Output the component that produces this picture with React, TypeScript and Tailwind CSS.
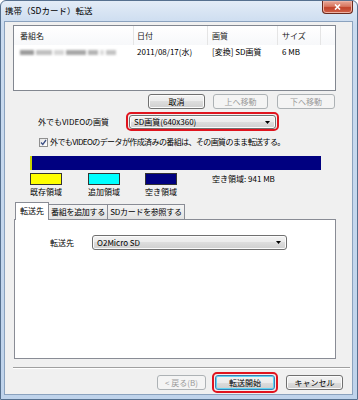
import clsx from 'clsx'
import { ReactNode } from 'react'

const btnFace = 'bg-[linear-gradient(#f2f2f2,#ebebeb_50%,#dddddd_50%,#cfcfcf)]'

const Btn = ({ w, children, disabled, def }: { w: string; children: ReactNode; disabled?: boolean; def?: boolean }) => (
    <div
        className={clsx(
            'h-[15px] flex items-center justify-center rounded-[3px] border text-[8px] leading-none',
            w,
            disabled && 'border-[#adb2b5] bg-[#f4f4f4] text-[#9a9a9a]',
            !disabled && !def && ['border-[#707070] text-black shadow-[inset_0_0_0_1px_#fbfbfb]', btnFace],
            def && ['border-[#3c7fb1] text-black shadow-[inset_0_0_0_1px_#5fd3f3]', btnFace]
        )}
    >
        {children}
    </div>
)

const Arrow = () => (
    <svg width="5" height="3" viewBox="0 0 5 3" className="shrink-0">
        <path d="M0 0h5L2.5 3z" fill="#000" />
    </svg>
)

const Combo = ({ w, children }: { w: string; children: ReactNode }) => (
    <div
        className={clsx(
            'h-[14px] flex items-center rounded-[3px] border border-[#707070] pl-[4px] pr-[5px] text-[8px] leading-none shadow-[inset_0_0_0_1px_#fbfbfb]',
            w,
            btnFace
        )}
    >
        <span className="flex-1">{children}</span>
        <Arrow />
    </div>
)

export default function App() {
    return (
        <div className="w-[358px] h-[400px] overflow-hidden bg-white">
            <div className="h-full flex flex-col rounded-t-[6px] border border-[#56708f] bg-[linear-gradient(#e3ecf7,#cadbef_24px,#bfd3eb)] font-['Noto_Sans_CJK_JP',sans-serif] text-black">
                {/* title bar */}
                <div className="h-[20px] shrink-0 flex items-start">
                    <span className="ml-[4px] mt-[3px] text-[8.5px] leading-[12px]">携帯（SDカード）転送</span>
                    <div className="ml-auto mr-[4px] w-[31px] h-[13px] flex items-center justify-center rounded-b-[4px] border border-t-0 border-[#6b2a1e] bg-[linear-gradient(#e9a999,#d8765f_45%,#c2432a_55%,#d0624a)] shadow-[inset_0_0_0_1px_#eeb2a4]">
                        <svg width="7" height="6" viewBox="0 0 7 6">
                            <path d="M1 0.5l5 5M6 0.5l-5 5" stroke="#fff" strokeWidth="1.6" />
                        </svg>
                    </div>
                </div>

                {/* client area */}
                <div className="flex-1 ml-[3px] mr-[4px] mb-[4px] border border-[#8ba2be] bg-[#f0f0f0] flex flex-col text-[8px] leading-none">
                    {/* list */}
                    <div className="ml-[8px] mt-[3px] w-[323px] h-[66px] border border-[#828790] bg-white flex flex-col">
                        <div className="h-[19px] flex bg-[linear-gradient(#ffffff,#f7f8fa)] text-[#222]">
                            <div className="w-[120px] pl-[6px] flex items-center border-r border-[#e5e5e5]">番組名</div>
                            <div className="w-[74px] pl-[3px] flex items-center border-r border-[#e5e5e5]">日付</div>
                            <div className="w-[70px] pl-[4px] flex items-center border-r border-[#e5e5e5]">画質</div>
                            <div className="w-[43px] pl-[4px] flex items-center border-r border-[#e5e5e5]">サイズ</div>
                            <div className="flex-1" />
                        </div>
                        <div className="h-[14px] flex items-center">
                            <div className="w-[120px] pl-[6px] flex items-center gap-[2px] blur-[0.8px]">
                                <span className="w-[14px] h-[5px] bg-[#9c9c9c]" />
                                <span className="w-[16px] h-[5px] bg-[#c0c0c0]" />
                                <span className="w-[10px] h-[5px] bg-[#d6d6d6]" />
                                <span className="w-[20px] h-[5px] bg-[#a8a8a8]" />
                                <span className="w-[10px] h-[5px] bg-[#b4b4b4]" />
                                <span className="w-[4px] h-[5px] bg-[#dcdcdc]" />
                                <span className="w-[10px] h-[5px] bg-[#c4c4c4]" />
                            </div>
                            <div className="w-[74px] pl-[3px]">2011/08/17(水)</div>
                            <div className="w-[70px] pl-[4px]">[変換] SD画質</div>
                            <div className="w-[43px] pl-[4px]">6 MB</div>
                        </div>
                    </div>

                    {/* list buttons */}
                    <div className="mt-[3px] pl-[143px] flex">
                        <Btn w="w-[57px]">取消</Btn>
                        <div className="w-[8px]" />
                        <Btn w="w-[55px]" disabled>
                            上へ移動
                        </Btn>
                        <div className="w-[9px]" />
                        <Btn w="w-[58px]" disabled>
                            下へ移動
                        </Btn>
                    </div>

                    {/* quality */}
                    <div className="mt-[3px] h-[19px] pl-[33px] flex items-center">
                        <div className="w-[88px]">外でもVIDEOの画質</div>
                        <div className="w-[153px] h-[19px] rounded-[5px] border-2 border-[#e0141e] p-[1px]">
                            <Combo w="w-full h-[13px]">SD画質(640x360)</Combo>
                        </div>
                    </div>

                    {/* checkbox */}
                    <div className="mt-[6px] h-[10px] pl-[34px] flex items-center">
                        <div className="w-[9px] h-[9px] border border-[#8f8f8f] bg-[linear-gradient(135deg,#e4e4e4,#ffffff)] flex items-center justify-center">
                            <svg width="7" height="7" viewBox="0 0 7 7">
                                <path d="M1 3.5l1.8 2L6 1" stroke="#3c4f84" strokeWidth="1.3" fill="none" />
                            </svg>
                        </div>
                        <span className="ml-[2px] tracking-[-0.6px]">外でもVIDEOのデータが作成済みの番組は、その画質のまま転送する。</span>
                    </div>

                    {/* capacity bar */}
                    <div className="mt-[9px] ml-[25px] w-[291px] h-[14px] flex bg-[#000080]">
                        <div className="w-[2px] bg-[#c8d400]" />
                    </div>

                    {/* legend */}
                    <div className="mt-[3px] ml-[25px] flex">
                        <div className="w-[32px] flex flex-col items-center">
                            <div className="w-[32px] h-[12px] border border-[#333] bg-[#ffff00]" />
                            <div className="mt-[2px] h-[10px] flex items-center whitespace-nowrap">既存領域</div>
                        </div>
                        <div className="w-[26px]" />
                        <div className="w-[32px] flex flex-col items-center">
                            <div className="w-[32px] h-[12px] border border-[#333] bg-[#00ffff]" />
                            <div className="mt-[2px] h-[10px] flex items-center whitespace-nowrap">追加領域</div>
                        </div>
                        <div className="w-[25px]" />
                        <div className="w-[32px] flex flex-col items-center">
                            <div className="w-[32px] h-[12px] border border-[#333] bg-[#000080]" />
                            <div className="mt-[2px] h-[10px] flex items-center whitespace-nowrap">空き領域</div>
                        </div>
                        <div className="ml-[35px] h-[12px] flex items-center">空き領域: 941 MB</div>
                    </div>

                    {/* tabs */}
                    <div className="mt-[5px] ml-[10px] h-[17px] flex items-end">
                        <div className="relative z-10 mb-[-1px] w-[34px] h-[18px] pb-[1px] flex items-center justify-center border border-b-0 border-[#898c95] bg-white">
                            転送先
                        </div>
                        <div className="w-[59px] h-[15px] flex items-center justify-center border border-l-0 border-b-0 border-[#898c95] bg-[linear-gradient(#f4f4f4,#e2e2e2)] tracking-[-0.3px]">
                            番組を追加する
                        </div>
                        <div className="w-[77px] h-[15px] flex items-center justify-center border border-l-0 border-b-0 border-[#898c95] bg-[linear-gradient(#f4f4f4,#e2e2e2)] tracking-[-0.3px]">
                            SDカードを参照する
                        </div>
                    </div>
                    <div className="ml-[9px] w-[322px] h-[140px] border border-[#898c95] bg-white pt-[15px] pl-[35px]">
                        <div className="h-[15px] flex items-center">
                            <div className="w-[42px]">転送先</div>
                            <Combo w="w-[195px] h-[15px]">O2Micro SD</Combo>
                        </div>
                    </div>

                    {/* separator */}
                    <div className="mt-[8px] ml-[8px] mr-[2px] h-[2px] border-t border-b border-t-[#a0a0a0] border-b-white" />

                    {/* bottom buttons */}
                    <div className="mt-[3px] h-[21px] pl-[152px] flex items-center">
                        <Btn w="w-[49px]" disabled>
                            &lt; 戻る(B)
                        </Btn>
                        <div className="ml-[6px] w-[66px] h-[21px] rounded-[5px] border-2 border-[#e0141e] p-[1px]">
                            <Btn w="w-full" def>
                                転送開始
                            </Btn>
                        </div>
                        <div className="w-[8px]" />
                        <Btn w="w-[57px]">キャンセル</Btn>
                    </div>
                </div>
            </div>
        </div>
    )
}
